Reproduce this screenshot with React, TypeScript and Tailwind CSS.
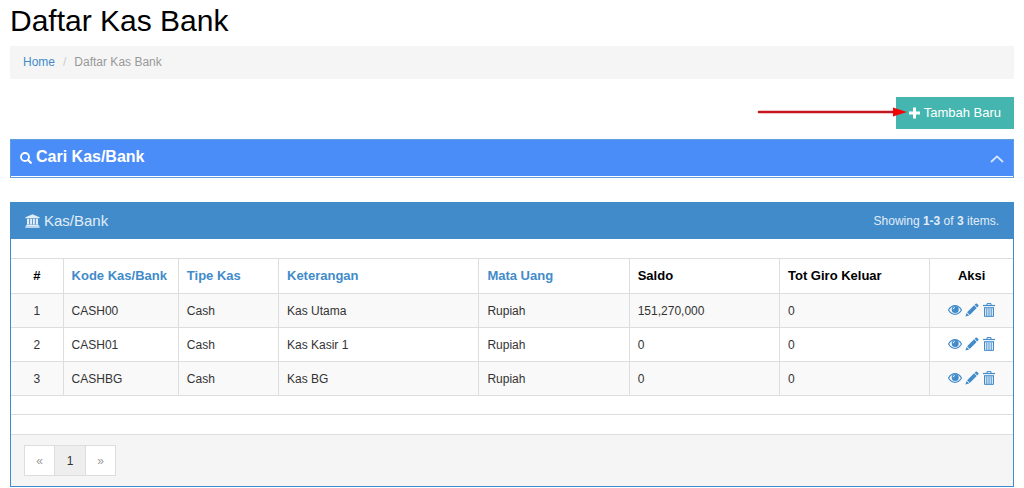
import React from "react";

type Row = {
  kode: string;
  tipe: string;
  keterangan: string;
  mataUang: string;
  saldo: string;
  giro: string;
};

const rows: Row[] = [
  { kode: "CASH00", tipe: "Cash", keterangan: "Kas Utama", mataUang: "Rupiah", saldo: "151,270,000", giro: "0" },
  { kode: "CASH01", tipe: "Cash", keterangan: "Kas Kasir 1", mataUang: "Rupiah", saldo: "0", giro: "0" },
  { kode: "CASHBG", tipe: "Cash", keterangan: "Kas BG", mataUang: "Rupiah", saldo: "0", giro: "0" },
];

const columns = [
  { label: "Kode Kas/Bank", sortable: true },
  { label: "Tipe Kas", sortable: true },
  { label: "Keterangan", sortable: true },
  { label: "Mata Uang", sortable: true },
  { label: "Saldo", sortable: false },
  { label: "Tot Giro Keluar", sortable: false },
];

function PlusIcon() {
  return (
    <svg viewBox="0 0 11 12" className="h-3 w-[11px]" fill="none" stroke="currentColor" aria-hidden="true">
      <path d="M5.5 .5V11.5M0 6H11" strokeWidth="3" />
    </svg>
  );
}

function SearchIcon() {
  return (
    <svg viewBox="0 0 12 12" className="mt-0.5 h-3 w-3" fill="none" stroke="currentColor" aria-hidden="true">
      <circle cx="5" cy="5" r="4" strokeWidth="1.8" />
      <path d="M8 8 10.800 10.800" strokeWidth="2.200" strokeLinecap="round" />
    </svg>
  );
}

function BankIcon() {
  return (
    <svg viewBox="0 0 15 14" className="h-3.5 w-[15px]" fill="currentColor" aria-hidden="true">
      <path d="M7.500 .3 14.600 3.200V4.200H.4V3.200Z" />
      <path d="M2 4.800H4.200V10.500H2ZM5.100 4.800H7.100V10.500H5.100ZM7.900 4.800H9.900V10.500H7.900ZM10.800 4.800H13V10.500H10.800Z" />
      <path d="M1.200 10.800H13.800V11.900H1.200ZM.4 12.200H14.600V13.700H.4Z" />
    </svg>
  );
}

function EyeIcon() {
  return (
    <svg viewBox="0 0 14 14" className="h-3.5 w-3.5" aria-hidden="true">
      <path d="M.5 7C2.200 4.200 4.400 2.700 7 2.700S11.800 4.200 13.500 7C11.800 9.800 9.600 11.300 7 11.300S2.200 9.800.5 7Z" fill="none" stroke="currentColor" strokeWidth="1.200" />
      <circle cx="7.200" cy="6.500" r="3.500" fill="currentColor" />
      <path d="M5.300 6.200A1.700 1.700 0 0 1 6.900 4.500" fill="none" stroke="#fff" strokeWidth=".9" />
    </svg>
  );
}

function PencilIcon() {
  return (
    <svg viewBox="0 0 14 14" className="h-3.5 w-3.5" fill="currentColor" aria-hidden="true">
      <path d="M.4 13.600 1.600 9.900 4.200 12.400ZM2.100 9.300 9.100 2.300 11.700 4.900 4.700 11.900ZM9.600 1.800 10.700.7Q11.400.1 12.100.7L13.300 1.900Q13.900 2.600 13.300 3.300L12.200 4.400Z" />
    </svg>
  );
}

function TrashIcon() {
  return (
    <svg viewBox="0 0 14 14" className="h-3.5 w-3.5" fill="none" stroke="currentColor" aria-hidden="true">
      <path d="M5 2V.6H9V2" strokeWidth="1" />
      <path d="M1 2.500H13" strokeWidth="1.200" />
      <path d="M2 4.800H12" strokeWidth="1.200" />
      <path d="M2.500 5V13.400H11.500V5" strokeWidth="1" />
      <path d="M4.300 5.500V13M6.100 5.500V13M7.900 5.500V13M9.700 5.500V13" strokeWidth=".9" />
    </svg>
  );
}

export default function App() {
  return (
    <main className="min-h-screen bg-white px-2.5 pt-1 font-['Liberation_Sans',Arial,sans-serif] text-xs text-[#333]">
      <h1 className="text-[30px] leading-[34px] text-black">Daftar Kas Bank</h1>

      <nav aria-label="Breadcrumb" className="mt-2 bg-[#f5f5f5] px-[13px] py-2">
        <ol className="flex leading-[17px]">
          <li>
            <a href="#home" className="text-[#428bca]">Home</a>
          </li>
          <li aria-hidden="true" className="px-2 text-[#ccc]">/</li>
          <li className="text-[#999]">Daftar Kas Bank</li>
        </ol>
      </nav>

      <div className="mt-[18px] flex justify-end">
        <div className="relative">
          <button type="button" className="flex h-8 items-center gap-1 bg-[#45b6af] px-[13px] text-[13px] text-white">
            <PlusIcon />
            Tambah Baru
          </button>
          <svg viewBox="0 0 150 10" className="absolute top-2.5 right-[107px] h-2.5 w-[150px]" aria-hidden="true">
            <path d="M2 5H138" stroke="#c4161c" strokeWidth="2.600" strokeLinecap="round" />
            <path d="M136 .5 150 5 136 9.500Z" fill="#f00808" />
          </svg>
        </div>
      </div>

      <section className="mt-2.5 border border-[#5f9ddb] bg-white pb-px">
        <h2 className="flex h-9 items-center justify-between bg-[#4b8df8] px-[9px] text-white">
          <span className="flex items-center gap-1 pb-0.5 text-base font-bold">
            <SearchIcon />
            Cari Kas/Bank
          </span>
          <button type="button" aria-label="Collapse" className="pt-0.5">
            <svg viewBox="0 0 14 8" className="h-2 w-3.5" fill="none" stroke="#d5e6ff" strokeWidth="1.800" aria-hidden="true">
              <path d="M1 7 7 1.400 13 7" />
            </svg>
          </button>
        </h2>
      </section>

      <section className="mt-6 border border-[#428bca]">
        <header className="flex h-9 items-center justify-between bg-[#428bca] px-3.5 text-[#e1edf7]">
          <h2 className="flex items-center gap-1 text-[15px]">
            <BankIcon />
            Kas/Bank
          </h2>
          <p>
            Showing <b>1-3</b> of <b>3</b> items.
          </p>
        </header>

        <div className="pt-[19px]">
          <table className="w-full table-fixed border-collapse">
            <colgroup>
              <col className="w-[5.2%]" />
              <col className="w-[11.5%]" />
              <col className="w-[10%]" />
              <col className="w-[20%]" />
              <col className="w-[15%]" />
              <col className="w-[15%]" />
              <col className="w-[15%]" />
              <col className="w-[8.3%]" />
            </colgroup>
            <thead>
              <tr className="h-[35px] border-y border-[#ddd] text-left text-[13px] text-black">
                <th scope="col" className="border-r border-[#ddd] text-center">#</th>
                {columns.map((c) => (
                  <th key={c.label} scope="col" className="border-r border-[#ddd] px-2 whitespace-nowrap">
                    {c.sortable ? (
                      <a href="#sort" className="text-[#428bca]">{c.label}</a>
                    ) : (
                      c.label
                    )}
                  </th>
                ))}
                <th scope="col" className="text-center">Aksi</th>
              </tr>
            </thead>
            <tbody>
              {rows.map((r, i) => (
                <tr key={r.kode} className="h-[34px] border-b border-[#ddd] odd:bg-[#f9f9f9]">
                  <td className="border-r border-[#ddd] text-center">{i + 1}</td>
                  <td className="border-r border-[#ddd] px-2">{r.kode}</td>
                  <td className="border-r border-[#ddd] px-2">{r.tipe}</td>
                  <td className="border-r border-[#ddd] px-2">{r.keterangan}</td>
                  <td className="border-r border-[#ddd] px-2">{r.mataUang}</td>
                  <td className="border-r border-[#ddd] px-2">{r.saldo}</td>
                  <td className="border-r border-[#ddd] px-2">{r.giro}</td>
                  <td>
                    <div className="flex items-center justify-center gap-[3px] pb-0.5 text-[#428bca]">
                      <a href="#view" aria-label="View"><EyeIcon /></a>
                      <a href="#edit" aria-label="Edit"><PencilIcon /></a>
                      <a href="#delete" aria-label="Delete"><TrashIcon /></a>
                    </div>
                  </td>
                </tr>
              ))}
            </tbody>
          </table>
        </div>

        <div className="mt-[18px] h-5 border-t border-[#ddd]" />

        <footer className="border-t border-[#ddd] bg-[#f5f5f5] px-[13px] py-2.5">
          <nav aria-label="Pagination" className="flex">
            <button type="button" disabled className="h-[31px] w-[31px] border border-[#ddd] bg-white text-[#999]">«</button>
            <button type="button" aria-current="page" className="h-[31px] w-[30px] border-y border-[#ddd] bg-[#eee]">1</button>
            <button type="button" disabled className="h-[31px] w-[31px] border border-[#ddd] bg-white text-[#999]">»</button>
          </nav>
        </footer>
      </section>
    </main>
  );
}
